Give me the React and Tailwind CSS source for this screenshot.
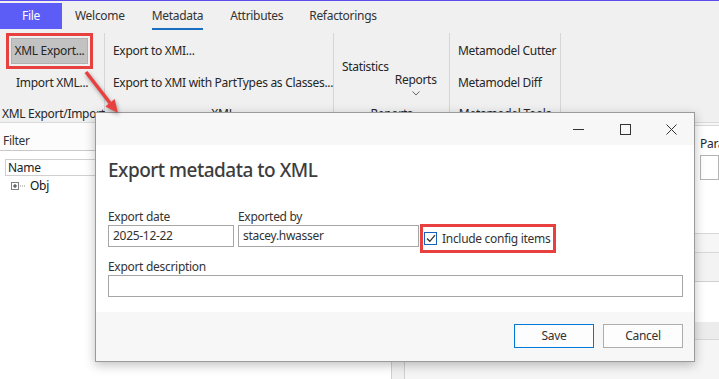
import React from 'react';

function Tab({ children, active, className = '' }) {
  return (
    <div className={`relative h-[26px] flex items-center ${className}`}>
      <span>{children}</span>
      {active && <div className="absolute left-0 right-0 bottom-[-1px] h-[2px] bg-[#1a6fc0]" />}
    </div>
  );
}

function Chevron() {
  return (
    <svg width="8" height="5" viewBox="0 0 8 5" className="block">
      <path d="M0.5 0.5 L4 4 L7.5 0.5" fill="none" stroke="#666" strokeWidth="1" />
    </svg>
  );
}

function Input({ value = '', className = '' }) {
  return (
    <div className={`h-[22px] border border-[#a6a6a6] bg-white flex items-center px-[4px] text-[#333] ${className}`}>
      {value}
    </div>
  );
}

export default function App() {
  return (
    <div className="relative w-[719px] h-[379px] overflow-hidden bg-white text-[12px] leading-[16px] tracking-[-0.3px] text-[#262626] font-['Noto_Sans',sans-serif]">
      {/* tab strip */}
      <div className="h-[31px] border-t border-[#5b4cf0] bg-[#f0f0f0] flex items-start text-[#333]">
        <div className="shrink-0 mt-[2px] w-[62px] h-[26px] bg-[#5c5cf6] text-white flex items-center justify-center">File</div>
        <Tab className="mt-[2px] ml-[13px]">Welcome</Tab>
        <Tab className="mt-[2px] ml-[27px]" active>Metadata</Tab>
        <Tab className="mt-[2px] ml-[27px]">Attributes</Tab>
        <Tab className="mt-[2px] ml-[26px]">Refactorings</Tab>
      </div>

      {/* ribbon */}
      <div className="h-[92px] bg-[#f0f0f0] border-b border-[#dadada] flex whitespace-nowrap">
        <div className="shrink-0 w-[105px] mt-[2px] border-r border-[#d6d6d6] flex flex-col">
          <div className="ml-[6px] w-[87px] h-[36px] border-[3px] border-[#e8403f] p-[2px]">
            <div className="h-full bg-[#c2c2c2] border border-[#b0b0b0] flex items-center justify-center">XML Export...</div>
          </div>
          <div className="mt-[6px] ml-[16px]">Import XML...</div>
          <div className="mt-auto mb-0 ml-[2px]">XML Export/Import</div>
        </div>
        <div className="shrink-0 w-[229px] mt-[2px] border-r border-[#d6d6d6] flex flex-col pl-[8px]">
          <div className="mt-[10px]">Export to XMI...</div>
          <div className="mt-[16px]">Export to XMI with PartTypes as Classes...</div>
          <div className="mt-auto mb-0 text-center">XML</div>
        </div>
        <div className="shrink-0 w-[116px] mt-[2px] border-r border-[#d6d6d6] flex flex-col">
          <div className="flex">
            <div className="ml-[8px] mt-[26px]">Statistics</div>
            <div className="ml-[6px] mt-[39px] flex flex-col items-center">
              <span>Reports</span>
              <div className="mt-[3px]"><Chevron /></div>
            </div>
          </div>
          <div className="mt-auto mb-0 text-center">Reports</div>
        </div>
        <div className="shrink-0 w-[111px] mt-[2px] border-r border-[#d6d6d6] flex flex-col pl-[8px]">
          <div className="mt-[10px]">Metamodel Cutter</div>
          <div className="mt-[16px]">Metamodel Diff</div>
          <div className="mt-auto mb-0 text-center pr-[8px]">Metamodel Tools</div>
        </div>
      </div>

      {/* work area */}
      <div className="flex h-[256px]">
        <div className="shrink-0 w-[391px] bg-white flex flex-col">
          <div className="h-[28px] border-b border-[#c8c8c8] bg-[#fcfcfc] pl-[3px] pt-[10px] text-[#333]">Filter</div>
          <div className="mt-[8px] ml-[5px] h-[17px] border-t border-b border-l border-[#d0d0d0] pl-[2px] text-[#222]">Name</div>
          <div className="mt-[2px] h-[16px] flex items-center pl-[11px]">
            <svg width="16" height="9" viewBox="0 0 16 9" className="block">
              <rect x="0.5" y="0.5" width="7" height="7" fill="#fff" stroke="#808080" />
              <path d="M2 4 H6 M4 2 V6" stroke="#333" />
              <path d="M9 4 H10 M11 4 H12 M13 4 H14" stroke="#909090" />
            </svg>
            <span className="ml-[3px] text-[#111]">Obj</span>
          </div>
        </div>
        <div className="shrink-0 w-[14px] bg-[#f0f0f0] border-l border-r border-[#d0d0d0]" />
        <div className="flex-1 min-w-0 flex flex-col bg-[#f7f7f7] overflow-hidden">
          <div className="mt-[2px] border-t border-[#d8d8d8] bg-white h-[108px] pl-[295px] pt-[10px]">
            <div className="whitespace-nowrap">Parameters</div>
            <div className="mt-[3px] h-[25px] border border-[#b4b4b4] bg-white" />
          </div>
          <div className="h-[20px] border-t border-b border-[#d8d8d8] bg-[#f6f6f6]" />
          <div className="h-[29px] border-b border-[#d0d0d0] bg-[#f3f3f3]" />
          <div className="h-[40px] bg-white" />
          <div className="h-[18px] bg-[#ececec] border-b border-[#d6d6d6]" />
          <div className="flex-1 bg-[#f5f5f5]" />
        </div>
      </div>

      {/* dialog */}
      <div className="absolute left-[95px] top-[112px] w-[600px] h-[250px] border border-[#9a9a9a] bg-white flex flex-col shadow-[0_3px_10px_rgba(0,0,0,0.25)]">
        <div className="h-[32px] bg-[#f7f7f7] flex items-center justify-end">
          <svg width="11" height="11" viewBox="0 0 11 11" className="mr-[36px]">
            <path d="M0 5.5 H11" stroke="#333" strokeWidth="1" />
          </svg>
          <svg width="11" height="11" viewBox="0 0 11 11" className="mr-[35px]">
            <rect x="0.5" y="0.5" width="10" height="10" fill="none" stroke="#333" />
          </svg>
          <svg width="11" height="11" viewBox="0 0 11 11" className="mr-[17px]">
            <path d="M0.5 0.5 L10.5 10.5 M10.5 0.5 L0.5 10.5" stroke="#333" />
          </svg>
        </div>
        <div className="flex-1 bg-white px-[12px] pr-[11px] pt-[11px]">
          <div className="h-[28px] text-[19px] leading-[28px] font-medium tracking-[-0.5px] text-[#3d3d3d]">Export metadata to XML</div>
          <div className="mt-[25px] flex items-end">
            <div className="w-[126px] flex flex-col">
              <div className="h-[16px] text-[#333]">Export date</div>
              <Input value="2025-12-22" />
            </div>
            <div className="ml-[4px] w-[181px] flex flex-col">
              <div className="h-[16px] text-[#333]">Exported by</div>
              <Input value="stacey.hwasser" />
            </div>
            <div className="ml-[1px] mb-[-6px] w-[136px] h-[29px] border-[3px] border-[#e8403f] flex items-center pl-[1px]">
              <div className="w-[13px] h-[13px] border border-[#1565c0] bg-white flex items-center justify-center">
                <svg width="10" height="9" viewBox="0 0 10 9">
                  <path d="M1 4.5 L3.8 7.3 L9 1.2" fill="none" stroke="#333" strokeWidth="1.3" />
                </svg>
              </div>
              <span className="ml-[5px] whitespace-nowrap text-[#333]">Include config items</span>
            </div>
          </div>
          <div className="mt-[12px] h-[16px] text-[#333]">Export description</div>
          <Input />
        </div>
        <div className="h-[49px] bg-[#f7f7f7] flex justify-end items-start pt-[12px] pr-[11px] gap-[9px]">
          <div className="w-[80px] h-[24px] border border-[#0078d7] bg-[#fdfdfd] flex items-center justify-center text-[#333]">Save</div>
          <div className="w-[80px] h-[24px] border border-[#adadad] bg-[#fdfdfd] flex items-center justify-center text-[#333]">Cancel</div>
        </div>
      </div>

      {/* callout arrow */}
      <svg width="719" height="379" className="absolute left-0 top-0 pointer-events-none drop-shadow-[1px_2px_2px_rgba(0,0,0,0.35)]">
        <line x1="86" y1="72" x2="110" y2="103" stroke="#e8403f" strokeWidth="3.5" />
        <polygon points="118,113 105.3,106.5 114.7,99.1" fill="#e8403f" />
      </svg>
    </div>
  );
}
